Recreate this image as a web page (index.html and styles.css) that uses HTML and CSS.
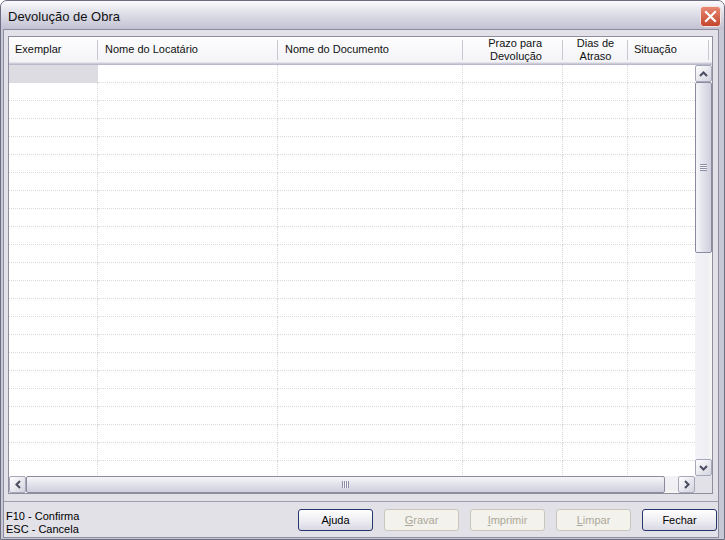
FILE: index.html
```html
<!DOCTYPE html>
<html lang="pt">
<head>
  <meta charset="UTF-8" />
  <title>Devolução de Obra</title>
  <link rel="stylesheet" href="styles.css">
</head>
<body>
  <div class="window">
    <div class="titlebar">
      <span class="title">Devolução de Obra</span>
      <span class="close-btn">
        <svg width="21" height="21" viewBox="0 0 21 21">
          <defs>
            <linearGradient id="red" x1="0" y1="0" x2="0" y2="1">
              <stop offset="0" stop-color="#e98a73" />
              <stop offset="1" stop-color="#c2432b" />
            </linearGradient>
          </defs>
          <rect x="0.5" y="0.5" width="20" height="20" rx="3" fill="url(#red)" stroke="#f3e4e0" />
          <path d="M6 6 L15 15 M15 6 L6 15" stroke="#fff" stroke-width="2.2" stroke-linecap="square" />
        </svg>
      </span>
    </div>

    <div class="client">
      <div class="grid">
        <div class="grid-head">
          <div class="hcell col1">Exemplar</div>
          <div class="hcell col2">Nome do Locatário</div>
          <div class="hcell col3">Nome do Documento</div>
          <div class="hcell col4 right">Prazo para<br>Devolução</div>
          <div class="hcell col5 center">Dias de<br>Atraso</div>
          <div class="hcell col6">Situação</div>
        </div>

        <div class="grid-body">
          <div class="rows" id="rows">
            <!-- linhas geradas pelo script -->
          </div>
          <div class="vscroll">
            <div class="sbtn">
              <svg width="9" height="6" viewBox="0 0 9 6"><path d="M1 5 L4.5 1.5 L8 5" fill="none" stroke="#4b4b60" stroke-width="2" /></svg>
            </div>
            <div class="vthumb"><span class="vgrip"></span></div>
            <div class="track"></div>
            <div class="sbtn">
              <svg width="9" height="6" viewBox="0 0 9 6"><path d="M1 1 L4.5 4.5 L8 1" fill="none" stroke="#4b4b60" stroke-width="2" /></svg>
            </div>
          </div>
        </div>

        <div class="hscroll">
          <div class="sbtn">
            <svg width="6" height="9" viewBox="0 0 6 9"><path d="M5 1 L1.5 4.5 L5 8" fill="none" stroke="#4b4b60" stroke-width="2" /></svg>
          </div>
          <div class="hthumb"><span class="hgrip"></span></div>
          <div class="track htrack"></div>
          <div class="sbtn">
            <svg width="6" height="9" viewBox="0 0 6 9"><path d="M1 1 L4.5 4.5 L1 8" fill="none" stroke="#4b4b60" stroke-width="2" /></svg>
          </div>
          <div class="corner"></div>
        </div>
      </div>

      <div class="footer">
        <div class="hints">
          <div>F10 - Confirma</div>
          <div>ESC - Cancela</div>
        </div>
        <div class="buttons">
          <button class="btn">Ajuda</button>
          <button class="btn" disabled><u>G</u>ravar</button>
          <button class="btn" disabled><u>I</u>mprimir</button>
          <button class="btn" disabled><u>L</u>impar</button>
          <button class="btn">Fechar</button>
        </div>
      </div>
    </div>
  </div>

  <script>
    const rows = document.getElementById('rows');
    for (let i = 0; i < 23; i++) {
      const row = document.createElement('div');
      row.className = 'row';
      for (let c = 1; c <= 6; c++) {
        const cell = document.createElement('div');
        cell.className = 'cell col' + c + (i === 0 && c === 1 ? ' selected' : '');
        row.appendChild(cell);
      }
      rows.appendChild(row);
    }
  </script>
</body>
</html>
```

FILE: styles.css
```css
* {
  box-sizing: border-box;
}

body {
  margin: 0;
  font-family: 'Liberation Sans', Arial, sans-serif;
  font-size: 11px;
  color: #000;
  background: #fff;
}

.window {
  width: 725px;
  height: 540px;
  border: 1px solid #6d6d80;
  border-radius: 7px 7px 0 0;
  padding: 0 5px 1px 2px;
  background: #c8c7d6;
  display: flex;
  flex-direction: column;
}

.titlebar {
  height: 28px;
  margin: 0 -5px 0 -2px;
  padding: 0 3px 0 7px;
  display: flex;
  align-items: center;
  justify-content: space-between;
  border-radius: 6px 6px 0 0;
  background: linear-gradient(#fbfbfd 0%, #e4e4ed 35%, #d2d2df 70%, #c1c1d3 100%);
}

.title {
  font-size: 13px;
  padding-top: 2px;
  color: #111;
}

.close-btn {
  display: flex;
  margin-top: 2px;
}

.client {
  flex: 1;
  display: flex;
  flex-direction: column;
  border: 1px solid #8d8d9f;
  background: #e2e1e8;
  padding: 6px 5px 0 4px;
}

/* Grade */
.grid {
  height: 458px;
  border: 1px solid #8e8e9e;
  background: #fff;
  display: flex;
  flex-direction: column;
}

.grid-head {
  height: 28px;
  display: flex;
  background: linear-gradient(#fdfdfe, #f3f3f7);
  box-shadow: inset 0 -1px #b9b9cc, inset 0 -2px #cdcdda, inset 0 -3px #e2e2ea;
  padding-bottom: 3px;
}

.hcell {
  height: 100%;
  display: flex;
  align-items: center;
  padding: 0 6px;
  line-height: 13px;
  white-space: nowrap;
  color: #111;
  background: linear-gradient(#c7c7d1, #c7c7d1) right center / 1px 20px no-repeat;
}

.hcell.col2,
.hcell.col3 {
  padding-left: 7px;
}

.hcell.right {
  justify-content: flex-end;
  text-align: right;
  padding-right: 21px;
}

.hcell.center {
  justify-content: center;
  text-align: center;
}

.col1 { width: 89px; flex: none; }
.col2 { width: 180px; flex: none; }
.col3 { width: 185px; flex: none; }
.col4 { width: 100px; flex: none; }
.col5 { width: 65px; flex: none; }
.col6 { width: 81px; flex: none; }

.grid-body {
  flex: 1;
  display: flex;
  min-height: 0;
}

.rows {
  width: 686px;
  overflow: hidden;
}

.row {
  display: flex;
  height: 18px;
}

.cell {
  height: 18px;
  border-right: 1px dotted #dadade;
  border-bottom: 1px dotted #dadade;
}

.cell.selected {
  background: #dddce2;
}

/* Barras de rolagem */
.vscroll {
  width: 17px;
  display: flex;
  flex-direction: column;
}

.sbtn {
  width: 17px;
  height: 17px;
  flex: none;
  display: flex;
  align-items: center;
  justify-content: center;
  border: 1px solid #a7a7ba;
  border-radius: 2px;
  background: linear-gradient(135deg, #ffffff, #e4e4ec 60%, #d3d3df);
}

.track {
  flex: 1;
  background: linear-gradient(to right, #f3f3f7, #eeeef3 70%, #f7f7f2);
}

.vthumb {
  height: 171px;
  flex: none;
  display: flex;
  align-items: center;
  justify-content: center;
  border: 1px solid #8b8ba0;
  border-radius: 2px;
  background: linear-gradient(to right, #f6f6f9, #e3e3ec 45%, #cfcfde);
}

.vgrip {
  width: 7px;
  height: 7px;
  background: repeating-linear-gradient(#8d8da5 0 1px, #f4f4f8 1px 2px);
}

.hscroll {
  height: 17px;
  display: flex;
}

.htrack {
  background: linear-gradient(#f3f3f7, #eeeef3 70%, #f7f7f2);
}

.hthumb {
  width: 639px;
  flex: none;
  display: flex;
  align-items: center;
  justify-content: center;
  border: 1px solid #8b8ba0;
  border-radius: 2px;
  background: linear-gradient(#f6f6f9, #e3e3ec 45%, #cfcfde);
}

.hgrip {
  width: 7px;
  height: 7px;
  background: repeating-linear-gradient(to right, #8d8da5 0 1px, #f4f4f8 1px 2px);
}

.corner {
  width: 17px;
  flex: none;
  background: #e2e1e8;
}

/* Rodapé */
.footer {
  flex: 1;
  margin: 7px -5px 0 -4px;
  border-top: 1px solid #9e9eb0;
  padding: 7px 1px 0 2px;
  display: flex;
  align-items: flex-start;
  justify-content: space-between;
}

.hints {
  line-height: 13px;
  padding-top: 1px;
}

.buttons {
  display: flex;
  gap: 11px;
}

.btn {
  width: 75px;
  height: 22px;
  font-family: 'Liberation Sans', Arial, sans-serif;
  font-size: 11px;
  color: #000;
  border: 1px solid #24386a;
  border-radius: 3px;
  background: linear-gradient(#ffffff, #f0f0f4 45%, #d9d8e4);
  padding: 0;
}

.btn:disabled {
  color: #aca899;
  border-color: #c9c7bc;
  background: #f3f2ec;
}
```
